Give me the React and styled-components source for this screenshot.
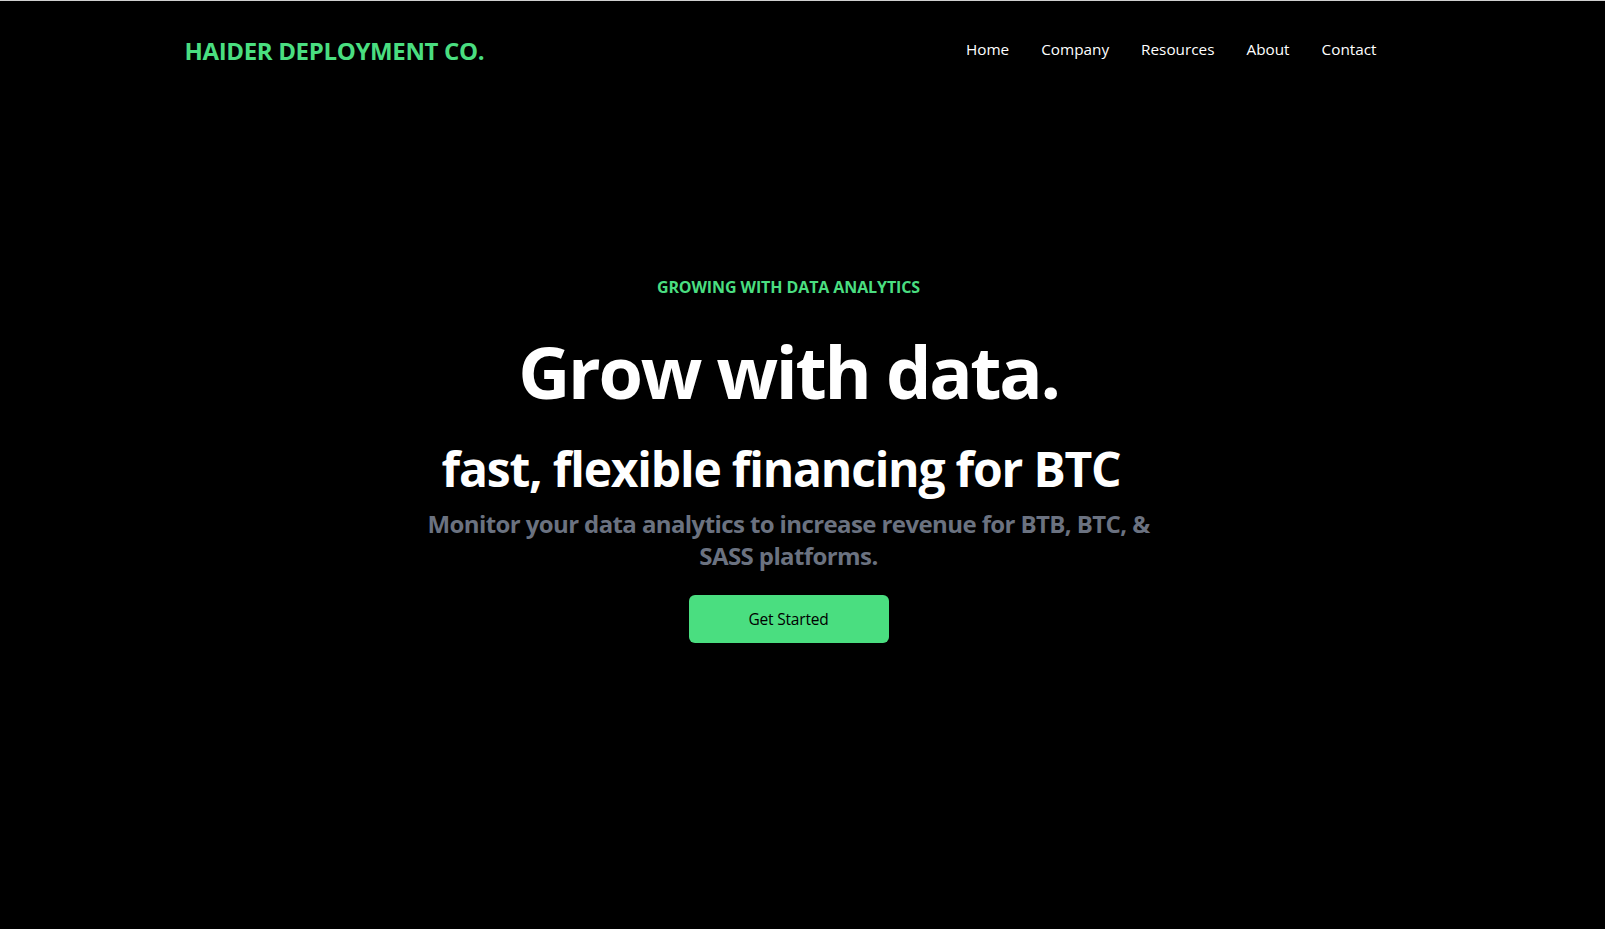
import React from 'react';
import styled, { createGlobalStyle } from 'styled-components';

const GlobalStyle = createGlobalStyle`
* { box-sizing: border-box; }
html, body {
  margin: 0;
  padding: 0;
  background: #000;
  font-family: "Open Sans", "Noto Sans", sans-serif;
}
`;

const Page = styled.div`
min-height: 929px;
background: #000;
border-top: 1px solid #cfcfcf;
`;

const Header = styled.header`
max-width: 1240px;
margin: 0 auto;
height: 99px;
padding: 0 30px 0 2px;
display: flex;
justify-content: space-between;
align-items: center;
`;

const Logo = styled.h1`
margin: 0;
font-size: 24px;
font-weight: 700;
color: #4ade80;
letter-spacing: -0.35px;
`;

const Nav = styled.ul`
list-style: none;
margin: 0 0 4px;
padding: 0;
display: flex;
`;

const NavItem = styled.li`
padding: 0 16px;
font-size: 15.3px;
color: #fff;
cursor: pointer;
`;

const Hero = styled.section`
display: flex;
flex-direction: column;
align-items: center;
text-align: center;
padding: 175px 28px 0 0;
`;

const Eyebrow = styled.p`
margin: 0;
font-size: 16px;
line-height: 24px;
font-weight: 700;
color: #4ade80;
letter-spacing: -0.1px;
`;

const Title = styled.h2`
margin: 29px 0 0;
font-size: 72px;
line-height: 1.2;
font-weight: 700;
color: #fff;
letter-spacing: -2.3px;
`;

const Subtitle = styled.div`
margin: 26px 0 0;
padding-right: 15px;
font-size: 48px;
line-height: 1.2;
font-weight: 700;
color: #fff;
letter-spacing: -1.2px;
`;

const Lead = styled.p`
margin: 10px 0 0;
max-width: 730px;
font-size: 24px;
line-height: 32px;
font-weight: 700;
color: #6b7280;
letter-spacing: -0.6px;
`;

const Button = styled.button`
margin-top: 23px;
width: 200px;
height: 48px;
border: none;
border-radius: 6px;
background: #4ade80;
color: #000;
font-family: inherit;
font-size: 15.5px;
letter-spacing: -0.2px;
cursor: pointer;
`;

const links = ['Home', 'Company', 'Resources', 'About', 'Contact'];

export default function App() {
    return (
        <Page>
            <GlobalStyle />
            <Header>
                <Logo>HAIDER DEPLOYMENT CO.</Logo>
                <Nav>
                    {links.map((l) => (
                        <NavItem key={l}>{l}</NavItem>
                    ))}
                </Nav>
            </Header>
            <Hero>
                <Eyebrow>GROWING WITH DATA ANALYTICS</Eyebrow>
                <Title>Grow with data.</Title>
                <Subtitle>fast, flexible financing for BTC</Subtitle>
                <Lead>Monitor your data analytics to increase revenue for BTB, BTC, &amp; SASS platforms.</Lead>
                <Button>Get Started</Button>
            </Hero>
        </Page>
    );
}
